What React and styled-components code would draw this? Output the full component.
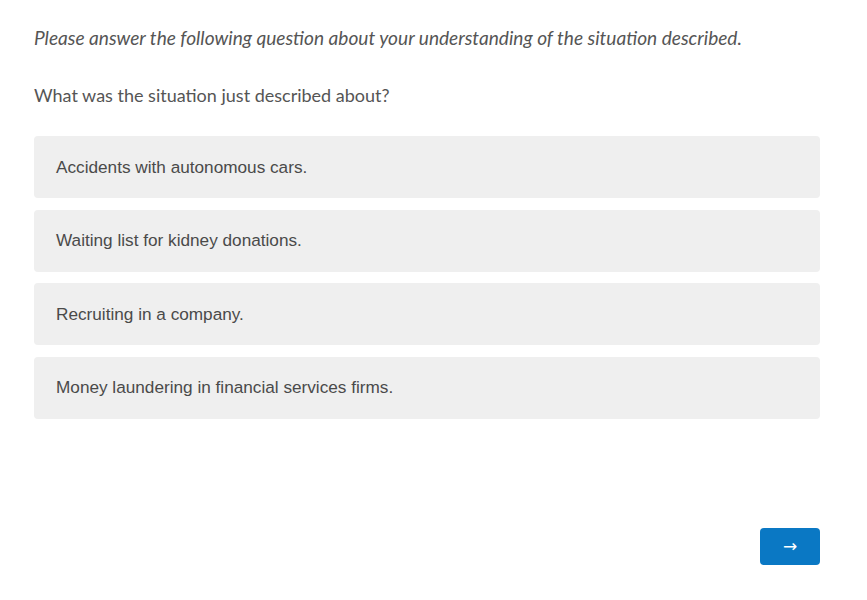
import React from "react";
import styled, { createGlobalStyle } from "styled-components";

const GlobalStyle = createGlobalStyle`
  html, body {
    margin: 0;
    padding: 0;
    background: #ffffff;
  }
`;

const Page = styled.div`
  width: 867px;
  height: 600px;
  box-sizing: border-box;
  padding: 26px 47px 0 34px;
  display: flex;
  flex-direction: column;
`;

const Intro = styled.p`
  margin: 0;
  font-family: Lato, "Open Sans", sans-serif;
  font-style: italic;
  font-size: 19.1px;
  line-height: 24px;
  color: #555555;
`;

const Question = styled.p`
  margin: 33px 0 0;
  font-family: Lato, "Open Sans", sans-serif;
  font-size: 18px;
  line-height: 24px;
  color: #555555;
`;

const Options = styled.div`
  margin-top: 29px;
  display: flex;
  flex-direction: column;
  gap: 11.5px;
`;

const Option = styled.div`
  height: 62px;
  box-sizing: border-box;
  padding: 0 22px;
  display: flex;
  align-items: center;
  background: #efefef;
  border-radius: 4px;
  font-family: "Liberation Sans", Arial, sans-serif;
  font-size: 17.2px;
  color: #4a4a4a;
  cursor: pointer;
`;

const Footer = styled.div`
  margin-top: 109px;
  display: flex;
  justify-content: flex-end;
`;

const NextButton = styled.button`
  width: 60px;
  height: 37px;
  border: none;
  border-radius: 4px;
  background: #0a78c4;
  color: #ffffff;
  font-family: "DejaVu Sans", sans-serif;
  font-size: 17px;
  display: flex;
  align-items: center;
  justify-content: center;
  cursor: pointer;
`;

const answers = [
  "Accidents with autonomous cars.",
  "Waiting list for kidney donations.",
  "Recruiting in a company.",
  "Money laundering in financial services firms.",
];

export default function App() {
  return (
    <>
      <GlobalStyle />
      <Page>
        <Intro>
          Please answer the following question about your understanding of the
          situation described.
        </Intro>
        <Question>What was the situation just described about?</Question>
        <Options>
          {answers.map((a) => (
            <Option key={a}>{a}</Option>
          ))}
        </Options>
        <Footer>
          <NextButton>→</NextButton>
        </Footer>
      </Page>
    </>
  );
}
